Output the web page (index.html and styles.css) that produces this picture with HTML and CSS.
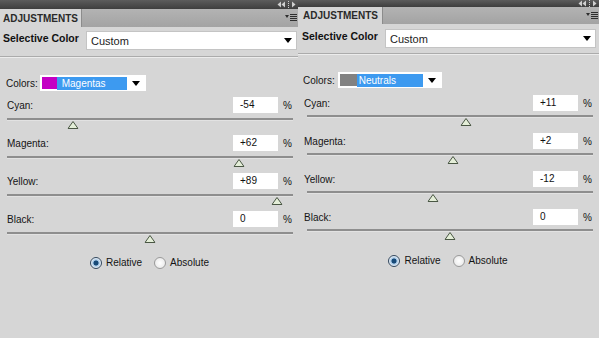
FILE: index.html
```html
<!doctype html>
<html>
<head>
    <meta charset="UTF-8">
    <title>Adjustments - Selective Color</title>
    <link rel="stylesheet" href="styles.css">
</head>
<body>
<div class="screen">

    <!-- Panneau gauche : Magentas -->
    <section class="panel panel-a">
        <div class="topbar">
            <svg class="collapse" width="20" height="7" viewBox="0 0 20 7">
                <polygon points="4,0.5 0.5,3.5 4,6.5" />
                <polygon points="8,0.5 4.5,3.5 8,6.5" />
                <rect x="11" y="0" width="1" height="1" /><rect x="11" y="2" width="1" height="1" />
                <rect x="11" y="4" width="1" height="1" /><rect x="11" y="6" width="1" height="1" />
                <polygon points="15,0.5 18.5,3.5 15,6.5" />
            </svg>
        </div>
        <div class="tabbar">
            <div class="tab">ADJUSTMENTS</div>
            <svg class="menu" width="12" height="8" viewBox="0 0 12 8">
                <polygon points="0,1 4,1 2,4" />
                <rect x="5" y="0" width="7" height="1" /><rect x="5" y="2" width="7" height="1" />
                <rect x="5" y="4" width="7" height="1" /><rect x="5" y="6" width="7" height="1" />
            </svg>
        </div>
        <div class="header">
            <b class="title">Selective Color</b>
            <div class="select preset"><span>Custom</span><i class="caret"></i></div>
        </div>
        <div class="body">
            <div class="colors">
                <span>Colors:</span>
                <div class="select colorpick">
                    <span class="swatch magenta"></span><span class="hl">Magentas</span><i class="caret"></i>
                </div>
            </div>
            <div class="row">
                <div class="row-top"><label>Cyan:</label><span class="num">-54</span><span class="pct">%</span></div>
                <div class="track"><svg class="thumb" style="left:23%" width="11" height="8" viewBox="0 0 11 8"><polygon points="5.5,0.5 10.5,7.5 0.5,7.5" /></svg></div>
            </div>
            <div class="row">
                <div class="row-top"><label>Magenta:</label><span class="num">+62</span><span class="pct">%</span></div>
                <div class="track"><svg class="thumb" style="left:81%" width="11" height="8" viewBox="0 0 11 8"><polygon points="5.5,0.5 10.5,7.5 0.5,7.5" /></svg></div>
            </div>
            <div class="row">
                <div class="row-top"><label>Yellow:</label><span class="num">+89</span><span class="pct">%</span></div>
                <div class="track"><svg class="thumb" style="left:94.5%" width="11" height="8" viewBox="0 0 11 8"><polygon points="5.5,0.5 10.5,7.5 0.5,7.5" /></svg></div>
            </div>
            <div class="row">
                <div class="row-top"><label>Black:</label><span class="num">0</span><span class="pct">%</span></div>
                <div class="track"><svg class="thumb" style="left:50%" width="11" height="8" viewBox="0 0 11 8"><polygon points="5.5,0.5 10.5,7.5 0.5,7.5" /></svg></div>
            </div>
            <div class="modes">
                <span class="radio on"></span><span class="mode-label">Relative</span>
                <span class="radio"></span><span class="mode-label">Absolute</span>
            </div>
        </div>
    </section>

    <!-- Panneau droit : Neutrals -->
    <section class="panel panel-b">
        <div class="topbar">
            <svg class="collapse" width="20" height="7" viewBox="0 0 20 7">
                <polygon points="4,0.5 0.5,3.5 4,6.5" />
                <polygon points="8,0.5 4.5,3.5 8,6.5" />
                <rect x="11" y="0" width="1" height="1" /><rect x="11" y="2" width="1" height="1" />
                <rect x="11" y="4" width="1" height="1" /><rect x="11" y="6" width="1" height="1" />
                <polygon points="15,0.5 18.5,3.5 15,6.5" />
            </svg>
        </div>
        <div class="tabbar">
            <div class="tab">ADJUSTMENTS</div>
            <svg class="menu" width="12" height="8" viewBox="0 0 12 8">
                <polygon points="0,1 4,1 2,4" />
                <rect x="5" y="0" width="7" height="1" /><rect x="5" y="2" width="7" height="1" />
                <rect x="5" y="4" width="7" height="1" /><rect x="5" y="6" width="7" height="1" />
            </svg>
        </div>
        <div class="header">
            <b class="title">Selective Color</b>
            <div class="select preset"><span>Custom</span><i class="caret"></i></div>
        </div>
        <div class="body">
            <div class="colors">
                <span>Colors:</span>
                <div class="select colorpick">
                    <span class="swatch neutral"></span><span class="hl">Neutrals</span><i class="caret"></i>
                </div>
            </div>
            <div class="row">
                <div class="row-top"><label>Cyan:</label><span class="num">+11</span><span class="pct">%</span></div>
                <div class="track"><svg class="thumb" style="left:55.5%" width="11" height="8" viewBox="0 0 11 8"><polygon points="5.5,0.5 10.5,7.5 0.5,7.5" /></svg></div>
            </div>
            <div class="row">
                <div class="row-top"><label>Magenta:</label><span class="num">+2</span><span class="pct">%</span></div>
                <div class="track"><svg class="thumb" style="left:51%" width="11" height="8" viewBox="0 0 11 8"><polygon points="5.5,0.5 10.5,7.5 0.5,7.5" /></svg></div>
            </div>
            <div class="row">
                <div class="row-top"><label>Yellow:</label><span class="num">-12</span><span class="pct">%</span></div>
                <div class="track"><svg class="thumb" style="left:44%" width="11" height="8" viewBox="0 0 11 8"><polygon points="5.5,0.5 10.5,7.5 0.5,7.5" /></svg></div>
            </div>
            <div class="row">
                <div class="row-top"><label>Black:</label><span class="num">0</span><span class="pct">%</span></div>
                <div class="track"><svg class="thumb" style="left:50%" width="11" height="8" viewBox="0 0 11 8"><polygon points="5.5,0.5 10.5,7.5 0.5,7.5" /></svg></div>
            </div>
            <div class="modes">
                <span class="radio on"></span><span class="mode-label">Relative</span>
                <span class="radio"></span><span class="mode-label">Absolute</span>
            </div>
        </div>
    </section>

</div>
</body>
</html>
```

FILE: styles.css
```css
body {
    margin: 0;
    padding: 0;
    background-color: #d6d6d6;
    font-family: "Liberation Sans", Arial, sans-serif;
    color: #141414;
}
* {
    box-sizing: border-box;
}
.screen {
    display: flex;
    width: 599px;
    height: 338px;
    overflow: hidden;
}
.panel {
    display: flex;
    flex-direction: column;
    background-color: #d6d6d6;
}
.panel-a {
    width: 298px;
}
.panel-b {
    width: 301px;
}

/** Barre sombre du haut */
.topbar {
    height: 9px;
    background: linear-gradient(#5c5c5c, #3e3e3e);
    display: flex;
    justify-content: flex-end;
    align-items: center;
    padding-right: 1px;
}
.panel-b .topbar {
    height: 7px;
}
.collapse {
    fill: #cfcfcf;
}

/** Onglets */
.tabbar {
    height: 18px;
    background: linear-gradient(#b3b3b3, #a3a3a3);
    display: flex;
    justify-content: space-between;
    align-items: stretch;
}
.panel-b .tabbar {
    height: 17px;
}
.tab {
    width: 82px;
    padding-left: 3px;
    background-color: #d6d6d6;
    border-right: 1px solid #8c8c8c;
    font-size: 10px;
    font-weight: bold;
    color: #2a2a2a;
    display: flex;
    align-items: center;
}
.panel-b .tab {
    width: 85px;
    padding-left: 5px;
}
.menu {
    align-self: center;
    margin-right: 1px;
    fill: #2e2e2e;
}

/** En-tete : type de reglage et preset */
.header {
    height: 30px;
    display: flex;
    justify-content: space-between;
    align-items: flex-start;
    padding: 4px 1px 0 3px;
    border-bottom: 1px solid #ababab;
    box-shadow: 0 1px 0 #ececec;
}
.panel-b .header {
    padding: 5px 3px 0 4px;
}
.title {
    font-size: 10.5px;
    line-height: 12px;
    margin-top: 1px;
    color: #111;
}
.select {
    background-color: #fff;
    display: flex;
    align-items: center;
}
.preset {
    width: 211px;
    height: 19px;
    border: 1px solid #c4c4c4;
    justify-content: space-between;
    padding: 0 4px 0 4px;
    font-size: 11px;
    color: #222;
}
.caret {
    width: 0;
    height: 0;
    border-left: 4px solid transparent;
    border-right: 4px solid transparent;
    border-top: 5px solid #000;
}

/** Corps du panneau */
.body {
    padding: 18px 5px 0 6px;
}
.panel-b .body {
    padding: 18px 6px 0 5px;
}
.colors {
    display: flex;
    align-items: center;
    height: 16px;
    font-size: 10px;
}
.colorpick {
    width: 106px;
    height: 16px;
    margin-left: 2px;
    padding: 0 2px;
}
.panel-b .colorpick {
    width: 104px;
    margin-left: 3px;
}
.swatch {
    width: 15px;
    height: 12px;
}
.magenta {
    background-color: #c400c4;
}
.neutral {
    width: 17px;
    background-color: #828282;
}
.hl {
    width: 70px;
    height: 13px;
    line-height: 13px;
    background-color: #3d9af0;
    color: #fff;
    padding-left: 5px;
}
.panel-b .hl {
    width: 66px;
    padding-left: 2px;
}
.colorpick .caret {
    margin-left: auto;
    margin-right: 4px;
}

/** Curseurs */
.row {
    height: 38px;
}
.colors + .row {
    margin-top: 6px;
}
.panel-b .colors + .row {
    margin-top: 7px;
}
.row-top {
    display: flex;
    align-items: center;
    height: 16px;
    font-size: 10px;
}
.row-top label {
    flex: 1;
    padding-left: 1px;
}
.num {
    width: 45px;
    height: 16px;
    line-height: 16px;
    background-color: #fff;
    padding-left: 7px;
    color: #111;
}
.pct {
    width: 10px;
    margin-left: 5px;
}
.track {
    position: relative;
    height: 2px;
    margin-top: 5px;
    margin-left: 1px;
    background-color: #8e8e8e;
    box-shadow: 0 1px 0 #e2e2e2;
}
.panel-b .track {
    margin-left: 4px;
    margin-top: 4px;
}
.thumb {
    position: absolute;
    top: 3px;
    transform: translateX(-50%);
    fill: #e4eed8;
    stroke: #4a5744;
    stroke-width: 1;
}

/** Relative / Absolute */
.modes {
    display: flex;
    justify-content: center;
    align-items: center;
    height: 13px;
    margin-top: 7px;
    font-size: 10px;
}
.radio {
    width: 12px;
    height: 12px;
    border-radius: 50%;
    border: 1px solid #9a9a9a;
    background: radial-gradient(circle, #ffffff 0, #e4e4e4 100%);
    margin-right: 4px;
}
.radio.on {
    border-color: #33485e;
    background: radial-gradient(circle, #174a78 0, #174a78 2.2px, #9cc1e2 2.8px, #c9ddef 4px, #eef4fa 5px);
}
.mode-label + .radio {
    margin-left: 12px;
}
```
